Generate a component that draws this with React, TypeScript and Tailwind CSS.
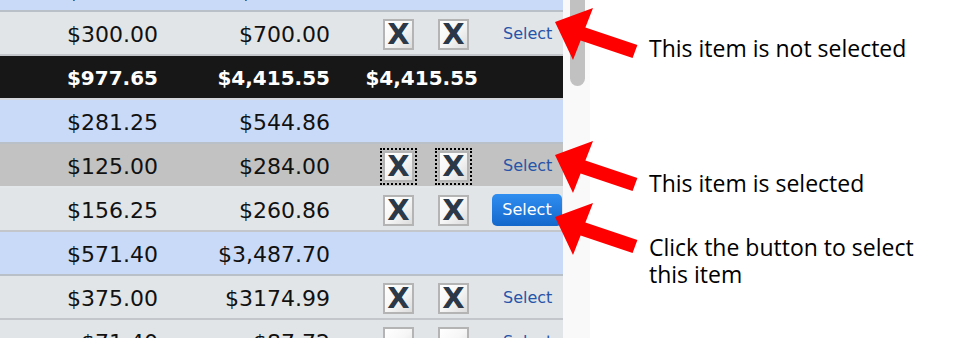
import React from 'react'

type Row = {
  a: string
  b: string
  kind: 'item' | 'group' | 'total'
  c?: string
  selected?: boolean
  checked?: boolean
  action?: 'link' | 'button'
}

const rows: Row[] = [
  { a: '$250.00', b: '$600.00', kind: 'group' },
  { a: '$300.00', b: '$700.00', kind: 'item', checked: true, action: 'link' },
  { a: '$977.65', b: '$4,415.55', kind: 'total', c: '$4,415.55' },
  { a: '$281.25', b: '$544.86', kind: 'group' },
  { a: '$125.00', b: '$284.00', kind: 'item', checked: true, selected: true, action: 'link' },
  { a: '$156.25', b: '$260.86', kind: 'item', checked: true, action: 'button' },
  { a: '$571.40', b: '$3,487.70', kind: 'group' },
  { a: '$375.00', b: '$3174.99', kind: 'item', checked: true, action: 'link' },
  { a: '$71.40', b: '$87.72', kind: 'item', checked: false, action: 'link' },
]

function Box({ checked, focused }: { checked?: boolean; focused?: boolean }) {
  return (
    <span
      className={
        'flex h-[31px] w-[31px] items-center justify-center border-2 border-[#b4b4b4] bg-linear-to-br from-white via-[#f6f6f6] to-[#dcdcdc] ' +
        (focused ? 'outline-2 outline-dotted outline-black outline-offset-[1px]' : '')
      }
    >
      {checked && (
        <span className="text-[29px] font-bold leading-none text-[#2a3848]">X</span>
      )}
    </span>
  )
}

function TableRow({ row }: { row: Row }) {
  const bg =
    row.kind === 'total'
      ? 'bg-[#171717] text-white font-bold text-[20px] border-[#d4d8dc]'
      : row.kind === 'group'
        ? 'bg-[#c9daf8] text-[#111] border-[#b9c0c8]'
        : row.selected
          ? 'bg-[#c2c2c2] text-[#111] border-[#e4e7ea]'
          : 'bg-[#e2e5e8] text-[#111] border-[#c3c7cc]'

  return (
    <div className={`flex h-[44px] shrink-0 items-center border-b-2 pt-[2px] ${bg}`}>
      <span className="w-[158px] text-right">{row.a}</span>
      <span className="w-[172px] text-right">{row.b}</span>
      {row.kind === 'total' && <span className="w-[148px] text-right">{row.c}</span>}
      {row.kind === 'item' && (
        <>
          <span className="ml-[53px]">
            <Box checked={row.checked} focused={row.selected} />
          </span>
          <span className="ml-[24px]">
            <Box checked={row.checked} focused={row.selected} />
          </span>
          {row.action === 'link' ? (
            <span className="ml-[34px] text-[16px] font-normal text-[#2654a8]">Select</span>
          ) : (
            <span className="ml-[23px] flex h-[32px] w-[70px] items-center justify-center rounded-[5px] bg-linear-to-b from-[#2f8ef0] to-[#1468cc] text-[16px] font-normal text-white">
              Select
            </span>
          )}
        </>
      )}
    </div>
  )
}

export default function App() {
  return (
    <div className="relative flex h-[338px] w-[976px] overflow-hidden bg-white">
      {/* table */}
      <div
        className="flex w-[563px] flex-col text-[22px]"
        style={{ fontFamily: '"DejaVu Sans", Verdana, sans-serif' }}
      >
        <div className="-mt-[32px] flex flex-col">
          {rows.map((r, i) => (
            <TableRow key={i} row={r} />
          ))}
        </div>
      </div>

      {/* scrollbar */}
      <div className="relative w-[27px] bg-[#f9f9f9]">
        <div className="absolute left-[7px] -top-[20px] h-[106px] w-[15px] rounded-full bg-[#c1c1c1]" />
      </div>

      {/* notes */}
      <div
        className="flex flex-1 flex-col pl-[59px] pt-[35px] text-[23px] leading-[27px] text-black"
        style={{ fontFamily: '"Open Sans", "Noto Sans", sans-serif' }}
      >
        <p>This item is not selected</p>
        <p className="mt-[108px]">This item is selected</p>
        <p className="mt-[37px]">
          Click the button to select
          <br />
          this item
        </p>
      </div>

      {/* arrows */}
      <svg
        className="pointer-events-none absolute left-0 top-0"
        width="976"
        height="338"
        viewBox="0 0 976 338"
      >
        {[0, 133, 195].map((dy) => (
          <polygon
            key={dy}
            transform={`translate(0 ${dy})`}
            fill="#ff0000"
            points="555,22 593,8 585.4,27.6 637.4,45.1 632.6,57.9 580.6,40.4 573,60"
          />
        ))}
      </svg>
    </div>
  )
}
